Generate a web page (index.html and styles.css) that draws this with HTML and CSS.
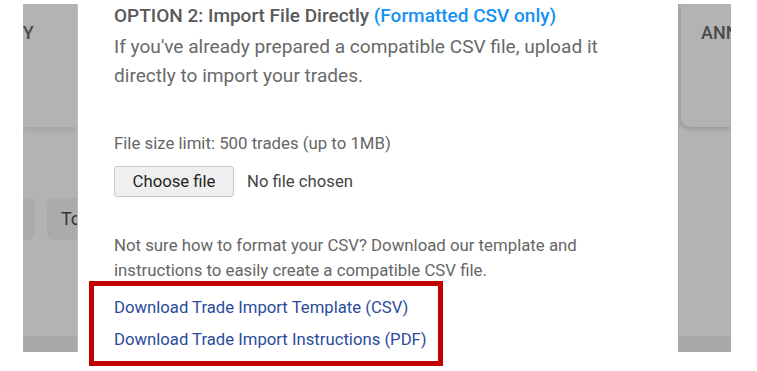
FILE: index.html
```html
<!DOCTYPE html>
<html lang="en">
<head>
<meta charset="utf-8">
<title>Import Trades</title>
<link rel="stylesheet" href="styles.css">
</head>
<body>
<div class="stage">
  <div class="strip strip-left">
    <div class="bg-card bg-card-left">
      <span class="bg-title bg-title-left">CY</span>
    </div>
    <div class="bg-buttons">
      <span class="bg-btn bg-btn-a"></span>
      <span class="bg-btn bg-btn-b">Total</span>
    </div>
    <div class="bg-footer"></div>
  </div>

  <main class="modal">
    <h2 class="opt-title">OPTION 2: Import File Directly <span class="opt-note">(Formatted CSV only)</span></h2>
    <p class="intro">If you've already prepared a compatible CSV file, upload it directly to import your trades.</p>
    <p class="limit">File size limit: 500 trades (up to 1MB)</p>
    <div class="file-row">
      <span class="file-btn">Choose file</span>
      <span class="file-name">No file chosen</span>
    </div>
    <p class="help">Not sure how to format your CSV? Download our template and instructions to easily create a compatible CSV file.</p>
    <div class="links-box">
      <a class="dl-link" href="#">Download Trade Import Template (CSV)</a>
      <a class="dl-link" href="#">Download Trade Import Instructions (PDF)</a>
    </div>
  </main>

  <div class="strip strip-right">
    <div class="bg-card bg-card-right">
      <span class="bg-title bg-title-right">ANNUAL</span>
    </div>
    <div class="bg-footer"></div>
  </div>
</div>
</body>
</html>
```

FILE: styles.css
```css
* { box-sizing: border-box; }
html, body {
  margin: 0;
  padding: 0;
  background: #ffffff;
  font-family: Roboto, "Liberation Sans", Arial, sans-serif;
}
.stage {
  display: flex;
  align-items: flex-start;
  padding-left: 23px;
  width: 757px;
  height: 371px;
  overflow: hidden;
}

/* dimmed background strips */
.strip {
  margin-top: 4px;
  height: 348px;
  background: #b3b3b3;
  overflow: hidden;
  display: flex;
  flex-direction: column;
  flex: none;
}
.strip-left {
  width: 55px;
  border-right: 1px solid #bcbcbc;
}
.strip-right {
  width: 53px;
  border-left: 1px solid #a4a4a4;
}
.bg-card {
  height: 123px;
  flex: none;
  background: #b3b3b3;
  display: flex;
  align-items: flex-start;
  padding-top: 17px;
}
.bg-card-left {
  box-shadow: 0 3px 6px rgba(0,0,0,0.09);
}
.bg-card-right {
  margin-left: 2px;
  border-bottom-left-radius: 9px;
  box-shadow: -1px 2px 4px rgba(0,0,0,0.16);
  padding-left: 20px;
}
.bg-title {
  font-size: 18px;
  font-weight: 500;
  color: #4a4a4a;
  white-space: nowrap;
  line-height: 24px;
}
.bg-title-left {
  margin-left: -12px;
}
.bg-buttons {
  display: flex;
  gap: 12px;
  margin-top: 71px;
  margin-left: -20px;
  flex: none;
}
.bg-btn {
  display: block;
  flex: none;
  height: 42px;
  border-radius: 7px;
  background: #ababab;
  font-size: 18px;
  color: #333333;
  line-height: 42px;
  white-space: nowrap;
  overflow: hidden;
}
.bg-btn-a { width: 32px; }
.bg-btn-b { width: 70px; padding-left: 14px; }
.bg-footer {
  margin-top: auto;
  height: 16px;
  flex: none;
  background: #a9a9a9;
}

/* modal */
.modal {
  width: 600px;
  flex: none;
  padding: 4px 36px 0 36px;
  background: #ffffff;
}
.opt-title {
  margin: 0;
  font-size: 19px;
  font-weight: 500;
  line-height: 24px;
  color: #595959;
  white-space: nowrap;
}
.opt-note {
  color: #1590f5;
}
.intro {
  margin: 4px 0 0 0;
  font-size: 19.1px;
  line-height: 29px;
  color: #696969;
  width: 500px;
}
.limit {
  margin: 41px 0 0 0;
  font-size: 16.8px;
  line-height: 24px;
  color: #666666;
}
.file-row {
  display: flex;
  align-items: center;
  margin-top: 11px;
  gap: 13px;
}
.file-btn {
  display: block;
  width: 120px;
  height: 31px;
  border: 1px solid #c9c9c9;
  border-radius: 3px;
  background: #efefef;
  font-size: 16.7px;
  line-height: 29px;
  text-align: center;
  color: #1f1f1f;
}
.file-name {
  font-size: 16.7px;
  color: #444444;
}
.help {
  margin: 36px 0 0 0;
  font-size: 16.8px;
  line-height: 25px;
  color: #666666;
  width: 480px;
}
.links-box {
  margin: -2px 0 0 -25px;
  width: 354px;
  border: 5px solid #c30000;
  padding: 6px 0 5px 20px;
  display: flex;
  flex-direction: column;
}
.dl-link {
  font-size: 16.7px;
  line-height: 32px;
  color: #2b4b9b;
  text-decoration: none;
  white-space: nowrap;
}
```
